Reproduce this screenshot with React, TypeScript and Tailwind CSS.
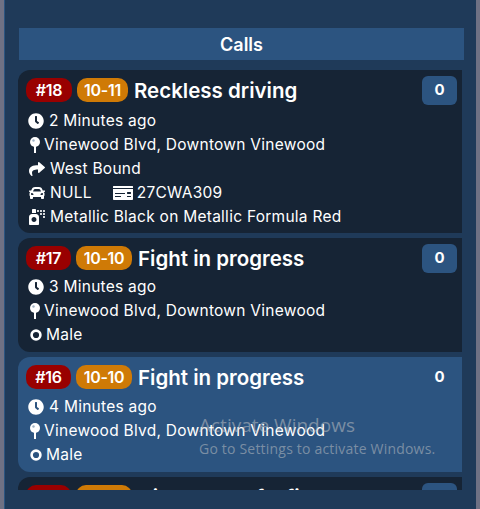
import React from "react";
import { FaClock, FaCar, FaMoneyCheck, FaShare, FaSprayCan } from "react-icons/fa";

function Row({ icon, children }: { icon: React.ReactNode; children: React.ReactNode }) {
  return (
    <div className="flex h-6 items-center text-[15.5px] leading-6 tracking-[0.26px] text-white">
      {icon}
      {children}
    </div>
  );
}

function Title({ id, code, title, count, active }: { id: string; code: string; title: string; count: string; active?: boolean }) {
  return (
    <div className="flex h-6 items-center">
      <span className={"flex h-6 items-center justify-center rounded-[10px] bg-[#990000] text-[16px] font-semibold tracking-[-0.3px] text-white " + (id === "#18" ? "w-[46px]" : "w-[45px]")}>{id}</span>
      <span className={"ml-[5px] flex h-6 items-center justify-center rounded-[10px] bg-[#cf7a06] text-[16px] font-semibold tracking-[-0.3px] text-white " + (code === "10-11" ? "w-[51px]" : "w-[56px]")}>{code}</span>
      <span className="ml-[6px] mt-[2px] text-[20.5px] font-semibold text-white">{title}</span>
      <span className={"ml-auto mr-[5px] flex h-[29px] w-[35px] items-center justify-center rounded-md text-[15px] font-bold text-white " + (active ? "" : "bg-[#2c5480]")}>{count}</span>
    </div>
  );
}

function Pin() {
  return (
    <svg viewBox="0 0 10 16" className="ml-[4px] mr-[4px] h-4 w-[10px]">
      <circle cx="5" cy="5" r="5" fill="#fff" />
      <circle cx="3.5" cy="3.5" r="1.2" fill="#9fb2c6" />
      <rect x="4" y="9" width="2" height="7" fill="#fff" />
    </svg>
  );
}

function Ring() {
  return (
    <svg viewBox="0 0 12 12" className="ml-[4px] mr-[4px] h-3 w-3">
      <circle cx="6" cy="6" r="4.4" fill="none" stroke="#fff" strokeWidth="2.6" />
    </svg>
  );
}

const clock = <FaClock className="ml-[2px] mr-[5px] h-4 w-4" />;

export default function App() {
  return (
    <div className="relative h-[509px] w-[480px] overflow-hidden bg-[#6f7184] px-1 font-['Inter',sans-serif]">
      <div className="flex h-full w-[472px] flex-col border-l border-[#2b5480] bg-[#1f3a59]">
        <div className="ml-[14px] mt-[28px] flex h-8 w-[445px] items-center justify-center bg-[#2c5480] text-[18px] font-semibold text-white">Calls</div>
        <div className="ml-[13px] mt-[10px] flex h-[420px] w-[444px] flex-col gap-[5px] overflow-hidden">
          <div className="h-[163px] shrink-0 rounded-l-xl bg-[#162435] pl-2 pt-[8px]">
            <Title id="#18" code="10-11" title="Reckless driving" count="0" />
            <div className="mt-[7px]">
              <Row icon={clock}>2 Minutes ago</Row>
              <Row icon={<Pin />}>Vinewood Blvd, Downtown Vinewood</Row>
              <Row icon={<FaShare className="ml-[3px] mr-[5px] h-4 w-4" />}>West Bound</Row>
              <Row icon={<FaCar className="ml-[3px] mr-[5px] h-4 w-4" />}>
                NULL
                <FaMoneyCheck className="ml-[21px] mr-[4px] h-4 w-5" />
                27CWA309
              </Row>
              <Row icon={<FaSprayCan className="ml-[3px] mr-[5px] h-4 w-4" />}>Metallic Black on Metallic Formula Red</Row>
            </div>
          </div>
          <div className="h-[114px] shrink-0 rounded-l-xl bg-[#162435] pl-2 pt-[8px]">
            <Title id="#17" code="10-10" title="Fight in progress" count="0" />
            <div className="mt-[5px]">
              <Row icon={clock}>3 Minutes ago</Row>
              <Row icon={<Pin />}>Vinewood Blvd, Downtown Vinewood</Row>
              <Row icon={<Ring />}>Male</Row>
            </div>
          </div>
          <div className="h-[115px] shrink-0 rounded-l-xl bg-[#2c5480] pl-2 pt-[8px]">
            <Title id="#16" code="10-10" title="Fight in progress" count="0" active />
            <div className="mt-[6px]">
              <Row icon={clock}>4 Minutes ago</Row>
              <Row icon={<Pin />}>Vinewood Blvd, Downtown Vinewood</Row>
              <Row icon={<Ring />}>Male</Row>
            </div>
          </div>
          <div className="h-[114px] shrink-0 rounded-l-xl bg-[#162435] pl-2 pt-[8px]">
            <Title id="#15" code="10-10" title="Discharge of a firearm" count="0" />
          </div>
        </div>
      </div>
      <div className="absolute left-[199px] top-[413px] font-['Open_Sans',sans-serif] text-[#c8c8c8]/50">
        <div className="text-[19px] leading-6">Activate Windows</div>
        <div className="mt-[2px] text-[14px] leading-5 tracking-[0.2px]">Go to Settings to activate Windows.</div>
      </div>
    </div>
  );
}
